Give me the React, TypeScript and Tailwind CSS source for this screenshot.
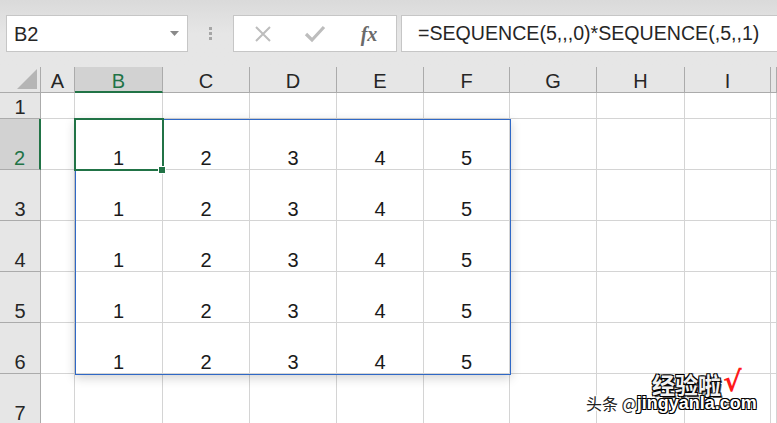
import React from "react";

const cols = ["A", "B", "C", "D", "E", "F", "G", "H", "I", ""];
const rows = [1, 2, 3, 4, 5, 6, 7];
const font = { fontFamily: '"Liberation Sans", Arial, sans-serif' };

function cellValue(r: number, c: number): string {
  if (r >= 2 && r <= 6 && c >= 1 && c <= 5) return String(c);
  return "";
}

export default function App() {
  return (
    <div className="w-[777px] h-[423px] overflow-hidden bg-white relative" style={font}>
      {/* Toolbar */}
      <div className="h-[67px] bg-gradient-to-b from-[#dadada] via-[#e6e6e6] to-[#e6e6e6] flex items-start pt-[15px] pl-[6px] gap-0">
        <div className="w-[182px] h-[37px] bg-white border border-[#c6c6c6] flex items-center pl-[7px] pr-[8px]">
          <span className="text-[20px] text-[#262626] leading-none flex-1">B2</span>
          <svg width="9" height="5" viewBox="0 0 9 5"><path d="M0 0h9L4.5 5z" fill="#8a8a8a" /></svg>
        </div>
        <div className="w-[45px] h-[37px] flex flex-col items-center justify-center gap-[2px]">
          <div className="w-[3px] h-[3px] bg-[#a6a6a6]" />
          <div className="w-[3px] h-[3px] bg-[#a6a6a6]" />
          <div className="w-[3px] h-[3px] bg-[#a6a6a6]" />
        </div>
        <div className="w-[164px] h-[37px] bg-white border border-[#c6c6c6] flex items-center">
          <div className="w-[54px] flex justify-center pl-[4px]">
            <svg width="18" height="18" viewBox="0 0 18 18"><path d="M2 2L16 16M16 2L2 16" stroke="#bdbdbd" strokeWidth="2" /></svg>
          </div>
          <div className="w-[54px] flex justify-center">
            <svg width="22" height="18" viewBox="0 0 22 18"><path d="M2 9l6 6L20 2" stroke="#bdbdbd" strokeWidth="3.2" fill="none" /></svg>
          </div>
          <div className="w-[54px] flex justify-center">
            <span className="text-[20px] italic font-bold text-[#6a6a6a] leading-none" style={{ fontFamily: '"Liberation Serif", serif' }}>fx</span>
          </div>
        </div>
        <div className="ml-[4px] flex-1 h-[37px] bg-white border border-r-0 border-[#c6c6c6] flex items-center pl-[16px]">
          <span className="text-[19.6px] text-[#262626] leading-none whitespace-nowrap">=SEQUENCE(5,,,0)*SEQUENCE(,5,,1)</span>
        </div>
      </div>

      {/* Grid */}
      <div className="relative">
        <div className="grid grid-cols-[41px_34px_88px_87px_87px_87px_86px_87px_88px_86px_6px] grid-rows-[26px_26px_51px_51px_51px_51px_51px_51px]">
          {/* header row */}
          <div className="bg-[#e6e6e6] border-r border-b border-[#ababab] relative">
            <svg className="absolute right-[3px] bottom-[3px]" width="20" height="20" viewBox="0 0 20 20"><path d="M20 0V20H0z" fill="#b5b5b5" /></svg>
          </div>
          {cols.map((c, i) => (
            <div
              key={"h" + i}
              className={
                c === "B"
                  ? "bg-[#d2d2d2] border-r border-[#ababab] border-b-2 border-b-[#217346] flex items-center justify-center text-[20px] text-[#217346] leading-none pt-[3px]"
                  : "bg-[#e6e6e6] border-r border-b border-[#ababab] flex items-center justify-center text-[20px] text-[#262626] leading-none pt-[2px]"
              }
            >
              {c}
            </div>
          ))}
          {rows.map((r) => (
            <React.Fragment key={"r" + r}>
              <div
                className={
                  r === 2
                    ? "bg-[#d2d2d2] border-r-2 border-r-[#217346] border-b border-[#ababab] flex items-end justify-center text-[20px] text-[#217346] leading-none pb-[1px]"
                    : "bg-[#e6e6e6] border-r border-b border-[#ababab] flex items-end justify-center text-[20px] text-[#262626] leading-none pb-[1px]"
                }
              >
                {r}
              </div>
              {cols.map((c, ci) => (
                <div
                  key={r + c + ci}
                  className="border-r border-b border-[#d4d4d4] flex items-end justify-center text-[20px] text-[#1a1a1a] leading-none pb-[1px]"
                >
                  {cellValue(r, ci)}
                </div>
              ))}
            </React.Fragment>
          ))}
        </div>

        {/* blue range */}
        <div className="absolute left-[75px] top-[52px] w-[436px] h-[256px] border border-[#2f68c6] shadow-[0_3px_10px_rgba(0,0,0,0.18)] pointer-events-none" />
        {/* selection */}
        <div className="absolute left-[74px] top-[51px] w-[90px] h-[53px] border-2 border-[#217346] pointer-events-none" />
        <div className="absolute left-[158px] top-[99px] w-[8px] h-[8px] bg-[#217346] border border-white pointer-events-none" />
      </div>

      {/* watermark */}
      <div className="absolute left-[652px] top-[375px] flex items-start pointer-events-none">
        <span
          className="text-[23px] font-bold text-[#f2f2f2] leading-[18px] [text-shadow:1px_1px_0_#000,-1px_-1px_0_#000,1px_-1px_0_#000,-1px_1px_0_#000,2px_2px_0_#555]"
          style={{ fontFamily: '"Noto Sans CJK SC", sans-serif' }}
        >
          经验啦
        </span>
        <span className="text-[28px] font-bold text-[#ff1a1a] leading-[18px] -mt-[2px] ml-[2px]" style={{ fontFamily: '"DejaVu Sans", sans-serif' }}>√</span>
      </div>
      <div className="absolute left-[586px] top-[394px] flex items-center pointer-events-none">
        <span
          className="text-[16px] text-[#222] leading-none [text-shadow:1px_1px_0_#fff,-1px_-1px_0_#fff,1px_-1px_0_#fff,-1px_1px_0_#fff]"
          style={{ fontFamily: '"Noto Sans CJK SC", sans-serif' }}
        >
          头条 @
        </span>
        <span
          className="text-[18px] font-bold text-white leading-none [text-shadow:1px_1px_0_#000,-1px_-1px_0_#000,1px_-1px_0_#000,-1px_1px_0_#000]"
          style={font}
        >
          jingyanla.com
        </span>
      </div>
    </div>
  );
}
